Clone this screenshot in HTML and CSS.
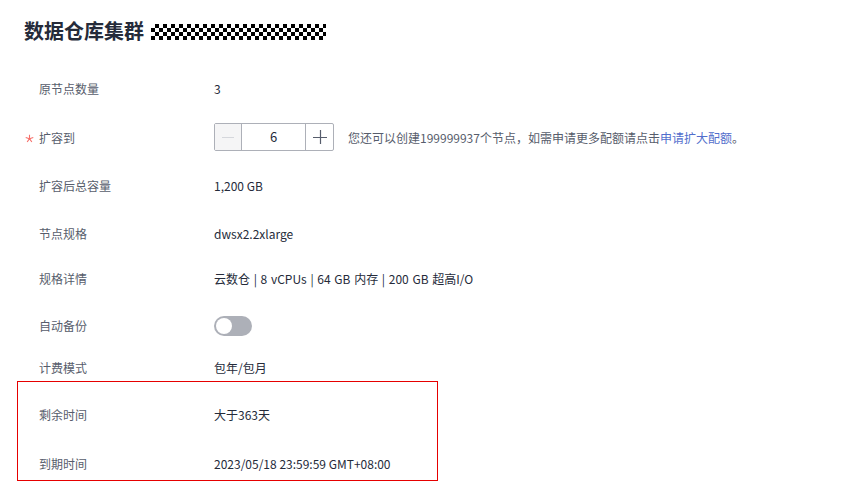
FILE: index.html
```html
<!DOCTYPE html>
<html lang="zh">
<head>
<meta charset="utf-8">
<link rel="stylesheet" href="styles.css">
</head>
<body>
<div class="page">
  <h1 class="title"><span>数据仓库集群</span><span class="mask"></span></h1>
  <div class="form">
    <div class="row r1"><div class="label">原节点数量</div><div class="value">3</div></div>
    <div class="row r2"><div class="label"><svg class="req" width="9" height="9" viewBox="0 0 10 10"><path d="M5 5.2V0.8M5 5.2L9.2 3.9M5 5.2L7.6 8.9M5 5.2L2.4 8.9M5 5.2L0.8 3.9" stroke="#f66f6a" stroke-width="1.2" fill="none"/></svg>扩容到</div>
      <div class="value">
        <div class="stepper">
          <span class="btn minus"><svg width="12" height="12" viewBox="0 0 12 12"><path d="M0 6.5H12" stroke="#d5d7dc" stroke-width="1"/></svg></span>
          <span class="num">6</span>
          <span class="btn plus"><svg width="14" height="14" viewBox="0 0 14 14"><path d="M0 7.5H14M7.5 0V14" stroke="#575d6c" stroke-width="1.2"/></svg></span>
        </div>
        <span class="hint">您还可以创建199999937个节点，如需申请更多配额请点击<a class="link">申请扩大配额</a>。</span>
      </div>
    </div>
    <div class="row r3"><div class="label">扩容后总容量</div><div class="value">1,200 GB</div></div>
    <div class="row r4"><div class="label">节点规格</div><div class="value">dwsx2.2xlarge</div></div>
    <div class="row r5"><div class="label">规格详情</div><div class="value spec">云数仓 | 8 vCPUs | 64 GB 内存 | 200 GB 超高I/O</div></div>
    <div class="row r6"><div class="label">自动备份</div><div class="value"><span class="switch"><span class="knob"></span></span></div></div>
    <div class="row r7"><div class="label">计费模式</div><div class="value">包年/包月</div></div>
    <div class="box">
      <div class="row r8"><div class="label">剩余时间</div><div class="value">大于363天</div></div>
      <div class="row r9"><div class="label">到期时间</div><div class="value">2023/05/18 23:59:59 GMT+08:00</div></div>
    </div>
  </div>
</div>
</body>
</html>
```
FILE: styles.css
```css
html, body {
  margin: 0;
  padding: 0;
  background: #fff;
}
body {
  font-family: "Noto Sans CJK SC", "Noto Sans", sans-serif;
  font-size: 12px;
  color: #252b3a;
}
.page {
  padding: 19px 0 0 0;
}
.title {
  margin: 0 0 0 24px;
  font-size: 20px;
  font-weight: 700;
  line-height: 24px;
  height: 24px;
  color: #252b3a;
  display: flex;
  align-items: center;
}
.mask {
  display: inline-block;
  width: 175px;
  height: 16px;
  margin-left: 7px;
  margin-top: 2px;
  background: repeating-conic-gradient(#000 0 25%, #fff 0 50%) 0 0 / 8px 8px;
}
.form {
  display: flex;
  flex-direction: column;
  margin-top: 33px;
}
.row {
  display: flex;
  align-items: center;
  height: 24px;
}
.label {
  width: 175px;
  padding-left: 39px;
  color: #575d6c;
  position: relative;
  flex: none;
}
.req {
  position: absolute;
  left: 25px;
  top: 5px;
}
.value {
  display: flex;
  align-items: center;
  color: #252b3a;
}
.spec {
  word-spacing: 1px;
}
.r2 { margin-top: 23px; height: 28px; }
.r3 { margin-top: 22px; }
.r4 { margin-top: 24px; }
.r5 { margin-top: 21px; }
.r6 { margin-top: 23px; }
.r7 { margin-top: 18px; }
.r8 { margin-top: 21px; }
.r9 { margin-top: 25px; }
.stepper {
  display: flex;
  height: 28px;
  border: 1px solid #adb0b8;
  border-radius: 2px;
  box-sizing: border-box;
  width: 120px;
}
.btn {
  display: flex;
  align-items: center;
  justify-content: center;
  width: 26px;
  flex: none;
}
.minus {
  background: #f5f5f6;
  border-right: 1px solid #adb0b8;
}
.plus {
  border-left: 1px solid #adb0b8;
  width: 27px;
}
.num {
  flex: 1;
  text-align: center;
  line-height: 26px;
  font-size: 13px;
}
.hint {
  margin-left: 14px;
  color: #575d6c;
}
.link {
  color: #526ecc;
}
.switch {
  display: inline-block;
  width: 38px;
  height: 20px;
  border-radius: 10px;
  background: #adb0b8;
  position: relative;
  margin-top: 2px;
}
.knob {
  position: absolute;
  left: 2px;
  top: 2px;
  width: 16px;
  height: 16px;
  border-radius: 50%;
  background: #fff;
}
.box {
  margin-left: 17px;
  width: 421px;
  box-sizing: border-box;
  border: 1px solid #e60000;
  height: 100px;
  margin-top: 2px;
}
.box .label {
  width: 175px;
  padding-left: 21px;
}
.box .r8 { margin-top: 20px; }
```
